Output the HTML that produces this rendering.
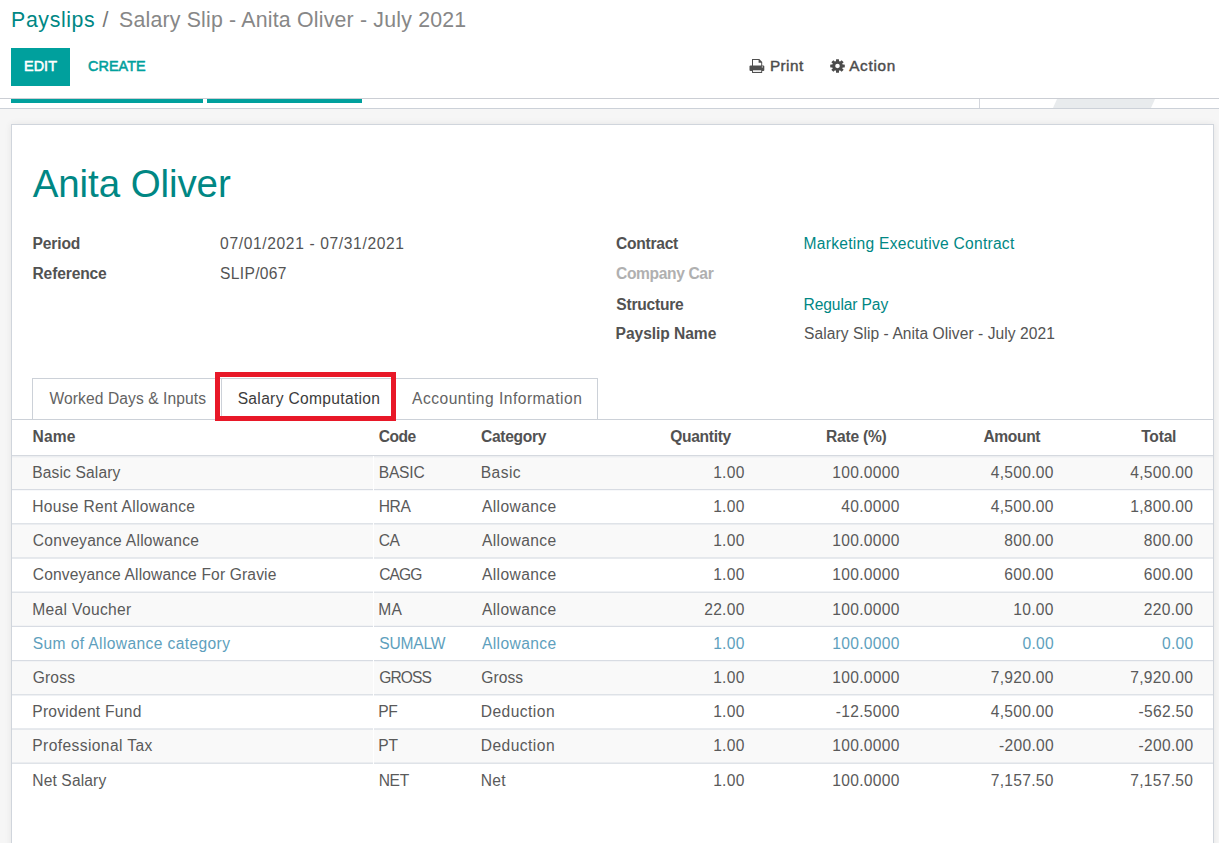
<!DOCTYPE html>
<html lang="en">
<head>
<meta charset="utf-8">
<title>Salary Slip - Anita Oliver - July 2021</title>
<style>
*{box-sizing:border-box;margin:0;padding:0}
html,body{width:1219px;height:843px;overflow:hidden;background:#fff}
body{font-family:"Liberation Sans",Arial,sans-serif;color:#4c4c4c;font-size:15.6px;position:relative}
.a,.t,.row,.rl{position:absolute}
.t{white-space:nowrap;line-height:20px;color:#4c4c4c}
.crumb{color:#878787}
.crumb.sep{color:#777}
.lnk{color:#008784 !important}
.lbl,.th{font-weight:bold;color:#525252}
.btn{-webkit-text-stroke:0.55px currentColor}
.act{-webkit-text-stroke:0.42px currentColor}
.btn.w{color:#fff}
.btn.tl{color:#00a09d}
.h1{color:#008784}
.muted{color:#b0b0b0}
.tabt{color:#636363}
.tabt.act2{color:#3c3c3c}
.td{color:#5a5a5a}
.val{color:#545454}
.info{color:#5e9fbd}
.row{left:12px;width:1201px}
.rl{left:12px;width:1201px;height:1px;background:#dbdfe5}
</style>
</head>
<body>
<!-- control panel -->
<div class="a" style="left:11px;top:48px;width:59px;height:38px;background:#00a09d"></div>
<svg class="a" style="left:749px;top:59px" width="16" height="14" viewBox="0 0 16 14"><g fill="#505050"><polygon points="3,7 3,0.100 10.300,0.100 13.200,3 13.200,7"/><rect x="0.500" y="6.400" width="14.800" height="5.700" rx="1"/><rect x="3" y="10" width="10.200" height="3.900" rx=".3"/></g><g fill="#fff"><polygon points="4,6.400 4,1.100 9.600,1.100 9.600,3.700 12.200,3.700 12.200,6.400"/><rect x="4" y="11.300" width="8.200" height="1.600"/><circle cx="13.300" cy="7.900" r=".55"/></g></svg>
<svg class="a" style="left:829.500px;top:59px" width="15" height="14" viewBox="0 0 15 15" preserveAspectRatio="none"><g fill="#4c4c4c"><circle cx="7.500" cy="7.500" r="5.400"/><rect x="6" y="0.200" width="3" height="14.600" rx=".4"/><rect x="6" y="0.200" width="3" height="14.600" rx=".4" transform="rotate(45 7.500 7.500)"/><rect x="6" y="0.200" width="3" height="14.600" rx=".4" transform="rotate(90 7.500 7.500)"/><rect x="6" y="0.200" width="3" height="14.600" rx=".4" transform="rotate(135 7.500 7.500)"/></g><circle cx="7.500" cy="7.500" r="2.300" fill="#fff"/></svg>
<!-- status bar -->
<div class="a" style="left:0;top:98px;width:1219px;height:1px;background:#cbced4"></div>
<div class="a" style="left:11px;top:99px;width:192px;height:4px;background:#00a09d"></div>
<div class="a" style="left:207px;top:99px;width:155px;height:4px;background:#00a09d"></div>
<div class="a" style="left:979px;top:99px;width:1px;height:9px;background:#d3d6dc"></div>
<svg class="a" style="left:1050px;top:99px" width="110" height="9" viewBox="0 0 110 9"><polygon points="7,0 105,0 101,9 3,9" fill="#e8ebed"/></svg>
<div class="a" style="left:0;top:108px;width:1219px;height:1px;background:#ccd1d8"></div>
<div class="a" style="left:0;top:109px;width:1219px;height:734px;background:#f6f6f6"></div>
<!-- sheet -->
<div class="a" style="left:11px;top:124px;width:1203px;height:740px;background:#fff;border:1px solid #d0d5dc;box-shadow:0 0 7px rgba(0,0,0,.07)"></div>
<!-- tabs -->
<div class="a" style="left:12px;top:419px;width:1201px;height:1px;background:#ccd1d8"></div>
<div class="a" style="left:32px;top:378px;width:566px;height:42px;border:1px solid #ccd1d8;border-bottom:none"></div>
<div class="a" style="left:221px;top:378px;width:175px;height:42px;background:#fff;border:1px solid #ccd1d8;border-bottom:none"></div>
<div class="a" style="left:215px;top:372px;width:181px;height:49px;border:5px solid #e81828"></div>
<!-- table -->
<svg class="a" style="left:12px;top:455px" width="1201" height="345" viewBox="0 0 1201 345"><rect x="0" y="0.40" width="1201" height="34.20" fill="#f9f9f9"/><rect x="0" y="68.80" width="1201" height="34.20" fill="#f9f9f9"/><rect x="0" y="137.20" width="1201" height="34.20" fill="#f9f9f9"/><rect x="0" y="205.60" width="1201" height="34.20" fill="#f9f9f9"/><rect x="0" y="274.00" width="1201" height="34.20" fill="#f9f9f9"/><rect x="0" y="1" width="1201" height="1" fill="#eceef1"/><rect x="0" y="2" width="1201" height="1" fill="#f3f4f5"/><rect x="0" y="34.00" width="1201" height="1.2" fill="#d8dce3"/><rect x="0" y="68.20" width="1201" height="1.2" fill="#d8dce3"/><rect x="0" y="102.40" width="1201" height="1.2" fill="#d8dce3"/><rect x="0" y="136.60" width="1201" height="1.2" fill="#d8dce3"/><rect x="0" y="170.80" width="1201" height="1.2" fill="#d8dce3"/><rect x="0" y="205.00" width="1201" height="1.2" fill="#d8dce3"/><rect x="0" y="239.20" width="1201" height="1.2" fill="#d8dce3"/><rect x="0" y="273.40" width="1201" height="1.2" fill="#d8dce3"/><rect x="0" y="307.60" width="1201" height="1.2" fill="#d8dce3"/><rect x="361" y="1" width="1" height="344" fill="#fff"/><rect x="0" y="0" width="1201" height="1" fill="#d5d9df"/></svg>
<span class="t crumb lnk" style="left:11.10px;top:10px;font-size:21.3px;letter-spacing:0.614px">Payslips</span>
<span class="t crumb sep" style="left:102.45px;top:10px;font-size:21.3px">/</span>
<span class="t crumb" style="left:119.00px;top:10px;font-size:21.3px;letter-spacing:0.200px">Salary Slip - Anita Oliver - July 2021</span>
<span class="t btn w" style="left:24.05px;top:56px;font-size:15.3px;letter-spacing:0.067px;transform:scaleX(.94);transform-origin:0 0">EDIT</span>
<span class="t btn tl" style="left:87.60px;top:56px;font-size:15.3px;letter-spacing:0.070px;transform:scaleX(.94);transform-origin:0 0">CREATE</span>
<span class="t act" style="left:769.95px;top:56px;font-size:15.3px;letter-spacing:0.438px">Print</span>
<span class="t act" style="left:849.15px;top:56px;font-size:15.3px;letter-spacing:0.720px">Action</span>
<span class="t h1" style="left:32.70px;top:174px;font-size:38.5px;letter-spacing:-0.082px">Anita Oliver</span>
<span class="t lbl" style="left:32.50px;top:234px;font-size:15.6px;letter-spacing:-0.140px">Period</span>
<span class="t val" style="left:220.10px;top:234px;font-size:15.6px;letter-spacing:0.634px">07/01/2021 - 07/31/2021</span>
<span class="t lbl" style="left:32.50px;top:264px;font-size:15.6px;letter-spacing:-0.144px">Reference</span>
<span class="t val" style="left:220.10px;top:264px;font-size:15.6px;letter-spacing:0.314px">SLIP/067</span>
<span class="t lbl" style="left:616.05px;top:234px;font-size:15.6px;letter-spacing:-0.264px">Contract</span>
<span class="t val lnk" style="left:803.60px;top:234px;font-size:15.6px;letter-spacing:0.259px">Marketing Executive Contract</span>
<span class="t lbl muted" style="left:616.05px;top:264px;font-size:15.6px;letter-spacing:-0.370px">Company Car</span>
<span class="t lbl" style="left:616.30px;top:295px;font-size:15.6px;letter-spacing:-0.231px">Structure</span>
<span class="t val lnk" style="left:803.60px;top:295px;font-size:15.6px;letter-spacing:-0.120px">Regular Pay</span>
<span class="t lbl" style="left:615.55px;top:324px;font-size:15.6px;letter-spacing:-0.055px">Payslip Name</span>
<span class="t val" style="left:804.10px;top:324px;font-size:15.6px;letter-spacing:0.055px">Salary Slip - Anita Oliver - July 2021</span>
<span class="t tabt" style="left:49.50px;top:389px;font-size:15.6px;letter-spacing:0.089px">Worked Days &amp; Inputs</span>
<span class="t tabt act2" style="left:237.65px;top:389px;font-size:15.6px;letter-spacing:0.318px">Salary Computation</span>
<span class="t tabt" style="left:412.05px;top:389px;font-size:15.6px;letter-spacing:0.493px">Accounting Information</span>
<span class="t th" style="left:32.50px;top:427px;font-size:15.6px;letter-spacing:0.117px">Name</span>
<span class="t th" style="left:378.70px;top:427px;font-size:15.6px;letter-spacing:-0.483px">Code</span>
<span class="t th" style="left:481.05px;top:427px;font-size:15.6px;letter-spacing:-0.307px">Category</span>
<span class="t th" style="left:670.20px;top:427px;font-size:15.6px;letter-spacing:-0.307px">Quantity</span>
<span class="t th" style="left:825.95px;top:427px;font-size:15.6px;letter-spacing:-0.221px">Rate (%)</span>
<span class="t th" style="left:983.40px;top:427px;font-size:15.6px;letter-spacing:-0.360px">Amount</span>
<span class="t th" style="left:1141.15px;top:427px;font-size:15.6px;letter-spacing:-0.200px">Total</span>
<span class="t td" style="left:32.25px;top:463px;font-size:15.6px;letter-spacing:0.127px">Basic Salary</span>
<span class="t td" style="left:378.70px;top:463px;font-size:15.6px;letter-spacing:-0.200px">BASIC</span>
<span class="t td" style="left:480.70px;top:463px;font-size:15.6px;letter-spacing:0.463px">Basic</span>
<span class="t td" style="right:474.30px;top:463px;font-size:15.6px;letter-spacing:0.300px">1.00</span>
<span class="t td" style="right:319.30px;top:463px;font-size:15.6px;letter-spacing:0.300px">100.0000</span>
<span class="t td" style="right:165.20px;top:463px;font-size:15.6px;letter-spacing:0.300px">4,500.00</span>
<span class="t td" style="right:25.70px;top:463px;font-size:15.6px;letter-spacing:0.300px">4,500.00</span>
<span class="t td" style="left:32.25px;top:497px;font-size:15.6px;letter-spacing:0.305px">House Rent Allowance</span>
<span class="t td" style="left:378.70px;top:497px;font-size:15.6px;letter-spacing:-0.350px">HRA</span>
<span class="t td" style="left:481.95px;top:497px;font-size:15.6px;letter-spacing:0.394px">Allowance</span>
<span class="t td" style="right:474.30px;top:497px;font-size:15.6px;letter-spacing:0.300px">1.00</span>
<span class="t td" style="right:319.30px;top:497px;font-size:15.6px;letter-spacing:0.300px">40.0000</span>
<span class="t td" style="right:165.20px;top:497px;font-size:15.6px;letter-spacing:0.300px">4,500.00</span>
<span class="t td" style="right:25.70px;top:497px;font-size:15.6px;letter-spacing:0.300px">1,800.00</span>
<span class="t td" style="left:32.75px;top:531px;font-size:15.6px;letter-spacing:0.258px">Conveyance Allowance</span>
<span class="t td" style="left:378.70px;top:531px;font-size:15.6px;letter-spacing:-0.350px">CA</span>
<span class="t td" style="left:481.95px;top:531px;font-size:15.6px;letter-spacing:0.394px">Allowance</span>
<span class="t td" style="right:474.30px;top:531px;font-size:15.6px;letter-spacing:0.300px">1.00</span>
<span class="t td" style="right:319.30px;top:531px;font-size:15.6px;letter-spacing:0.300px">100.0000</span>
<span class="t td" style="right:165.20px;top:531px;font-size:15.6px;letter-spacing:0.300px">800.00</span>
<span class="t td" style="right:25.70px;top:531px;font-size:15.6px;letter-spacing:0.300px">800.00</span>
<span class="t td" style="left:32.75px;top:565px;font-size:15.6px;letter-spacing:0.147px">Conveyance Allowance For Gravie</span>
<span class="t td" style="left:379.20px;top:565px;font-size:15.6px;letter-spacing:-0.900px">CAGG</span>
<span class="t td" style="left:481.95px;top:565px;font-size:15.6px;letter-spacing:0.394px">Allowance</span>
<span class="t td" style="right:474.30px;top:565px;font-size:15.6px;letter-spacing:0.300px">1.00</span>
<span class="t td" style="right:319.30px;top:565px;font-size:15.6px;letter-spacing:0.300px">100.0000</span>
<span class="t td" style="right:165.20px;top:565px;font-size:15.6px;letter-spacing:0.300px">600.00</span>
<span class="t td" style="right:25.70px;top:565px;font-size:15.6px;letter-spacing:0.300px">600.00</span>
<span class="t td" style="left:32.25px;top:600px;font-size:15.6px;letter-spacing:0.336px">Meal Voucher</span>
<span class="t td" style="left:378.20px;top:600px;font-size:15.6px;letter-spacing:0.350px">MA</span>
<span class="t td" style="left:481.95px;top:600px;font-size:15.6px;letter-spacing:0.394px">Allowance</span>
<span class="t td" style="right:474.30px;top:600px;font-size:15.6px;letter-spacing:0.300px">22.00</span>
<span class="t td" style="right:319.30px;top:600px;font-size:15.6px;letter-spacing:0.300px">100.0000</span>
<span class="t td" style="right:165.20px;top:600px;font-size:15.6px;letter-spacing:0.300px">10.00</span>
<span class="t td" style="right:25.70px;top:600px;font-size:15.6px;letter-spacing:0.300px">220.00</span>
<span class="t td info" style="left:32.75px;top:634px;font-size:15.6px;letter-spacing:0.379px">Sum of Allowance category</span>
<span class="t td info" style="left:379.20px;top:634px;font-size:15.6px;letter-spacing:-0.210px">SUMALW</span>
<span class="t td info" style="left:481.95px;top:634px;font-size:15.6px;letter-spacing:0.394px">Allowance</span>
<span class="t td info" style="right:474.30px;top:634px;font-size:15.6px;letter-spacing:0.300px">1.00</span>
<span class="t td info" style="right:319.30px;top:634px;font-size:15.6px;letter-spacing:0.300px">100.0000</span>
<span class="t td info" style="right:164.95px;top:634px;font-size:15.6px;letter-spacing:0.300px">0.00</span>
<span class="t td info" style="right:25.45px;top:634px;font-size:15.6px;letter-spacing:0.300px">0.00</span>
<span class="t td" style="left:32.75px;top:668px;font-size:15.6px;letter-spacing:0.150px">Gross</span>
<span class="t td" style="left:379.20px;top:668px;font-size:15.6px;letter-spacing:-0.900px">GROSS</span>
<span class="t td" style="left:481.20px;top:668px;font-size:15.6px;letter-spacing:0.088px">Gross</span>
<span class="t td" style="right:474.30px;top:668px;font-size:15.6px;letter-spacing:0.300px">1.00</span>
<span class="t td" style="right:319.30px;top:668px;font-size:15.6px;letter-spacing:0.300px">100.0000</span>
<span class="t td" style="right:165.20px;top:668px;font-size:15.6px;letter-spacing:0.300px">7,920.00</span>
<span class="t td" style="right:25.70px;top:668px;font-size:15.6px;letter-spacing:0.300px">7,920.00</span>
<span class="t td" style="left:32.25px;top:702px;font-size:15.6px;letter-spacing:0.254px">Provident Fund</span>
<span class="t td" style="left:378.20px;top:702px;font-size:15.6px;letter-spacing:-0.250px">PF</span>
<span class="t td" style="left:480.70px;top:702px;font-size:15.6px;letter-spacing:0.456px">Deduction</span>
<span class="t td" style="right:474.30px;top:702px;font-size:15.6px;letter-spacing:0.300px">1.00</span>
<span class="t td" style="right:319.30px;top:702px;font-size:15.6px;letter-spacing:0.300px">-12.5000</span>
<span class="t td" style="right:165.20px;top:702px;font-size:15.6px;letter-spacing:0.300px">4,500.00</span>
<span class="t td" style="right:25.45px;top:702px;font-size:15.6px;letter-spacing:0.300px">-562.50</span>
<span class="t td" style="left:32.25px;top:736px;font-size:15.6px;letter-spacing:0.397px">Professional Tax</span>
<span class="t td" style="left:378.20px;top:736px;font-size:15.6px">PT</span>
<span class="t td" style="left:480.70px;top:736px;font-size:15.6px;letter-spacing:0.456px">Deduction</span>
<span class="t td" style="right:474.30px;top:736px;font-size:15.6px;letter-spacing:0.300px">1.00</span>
<span class="t td" style="right:319.30px;top:736px;font-size:15.6px;letter-spacing:0.300px">100.0000</span>
<span class="t td" style="right:164.95px;top:736px;font-size:15.6px;letter-spacing:0.300px">-200.00</span>
<span class="t td" style="right:25.45px;top:736px;font-size:15.6px;letter-spacing:0.300px">-200.00</span>
<span class="t td" style="left:32.25px;top:771px;font-size:15.6px;letter-spacing:0.128px">Net Salary</span>
<span class="t td" style="left:378.70px;top:771px;font-size:15.6px;letter-spacing:-0.350px">NET</span>
<span class="t td" style="left:480.70px;top:771px;font-size:15.6px;letter-spacing:0.350px">Net</span>
<span class="t td" style="right:474.30px;top:771px;font-size:15.6px;letter-spacing:0.300px">1.00</span>
<span class="t td" style="right:319.30px;top:771px;font-size:15.6px;letter-spacing:0.300px">100.0000</span>
<span class="t td" style="right:165.20px;top:771px;font-size:15.6px;letter-spacing:0.300px">7,157.50</span>
<span class="t td" style="right:25.70px;top:771px;font-size:15.6px;letter-spacing:0.300px">7,157.50</span>
</body>
</html>
